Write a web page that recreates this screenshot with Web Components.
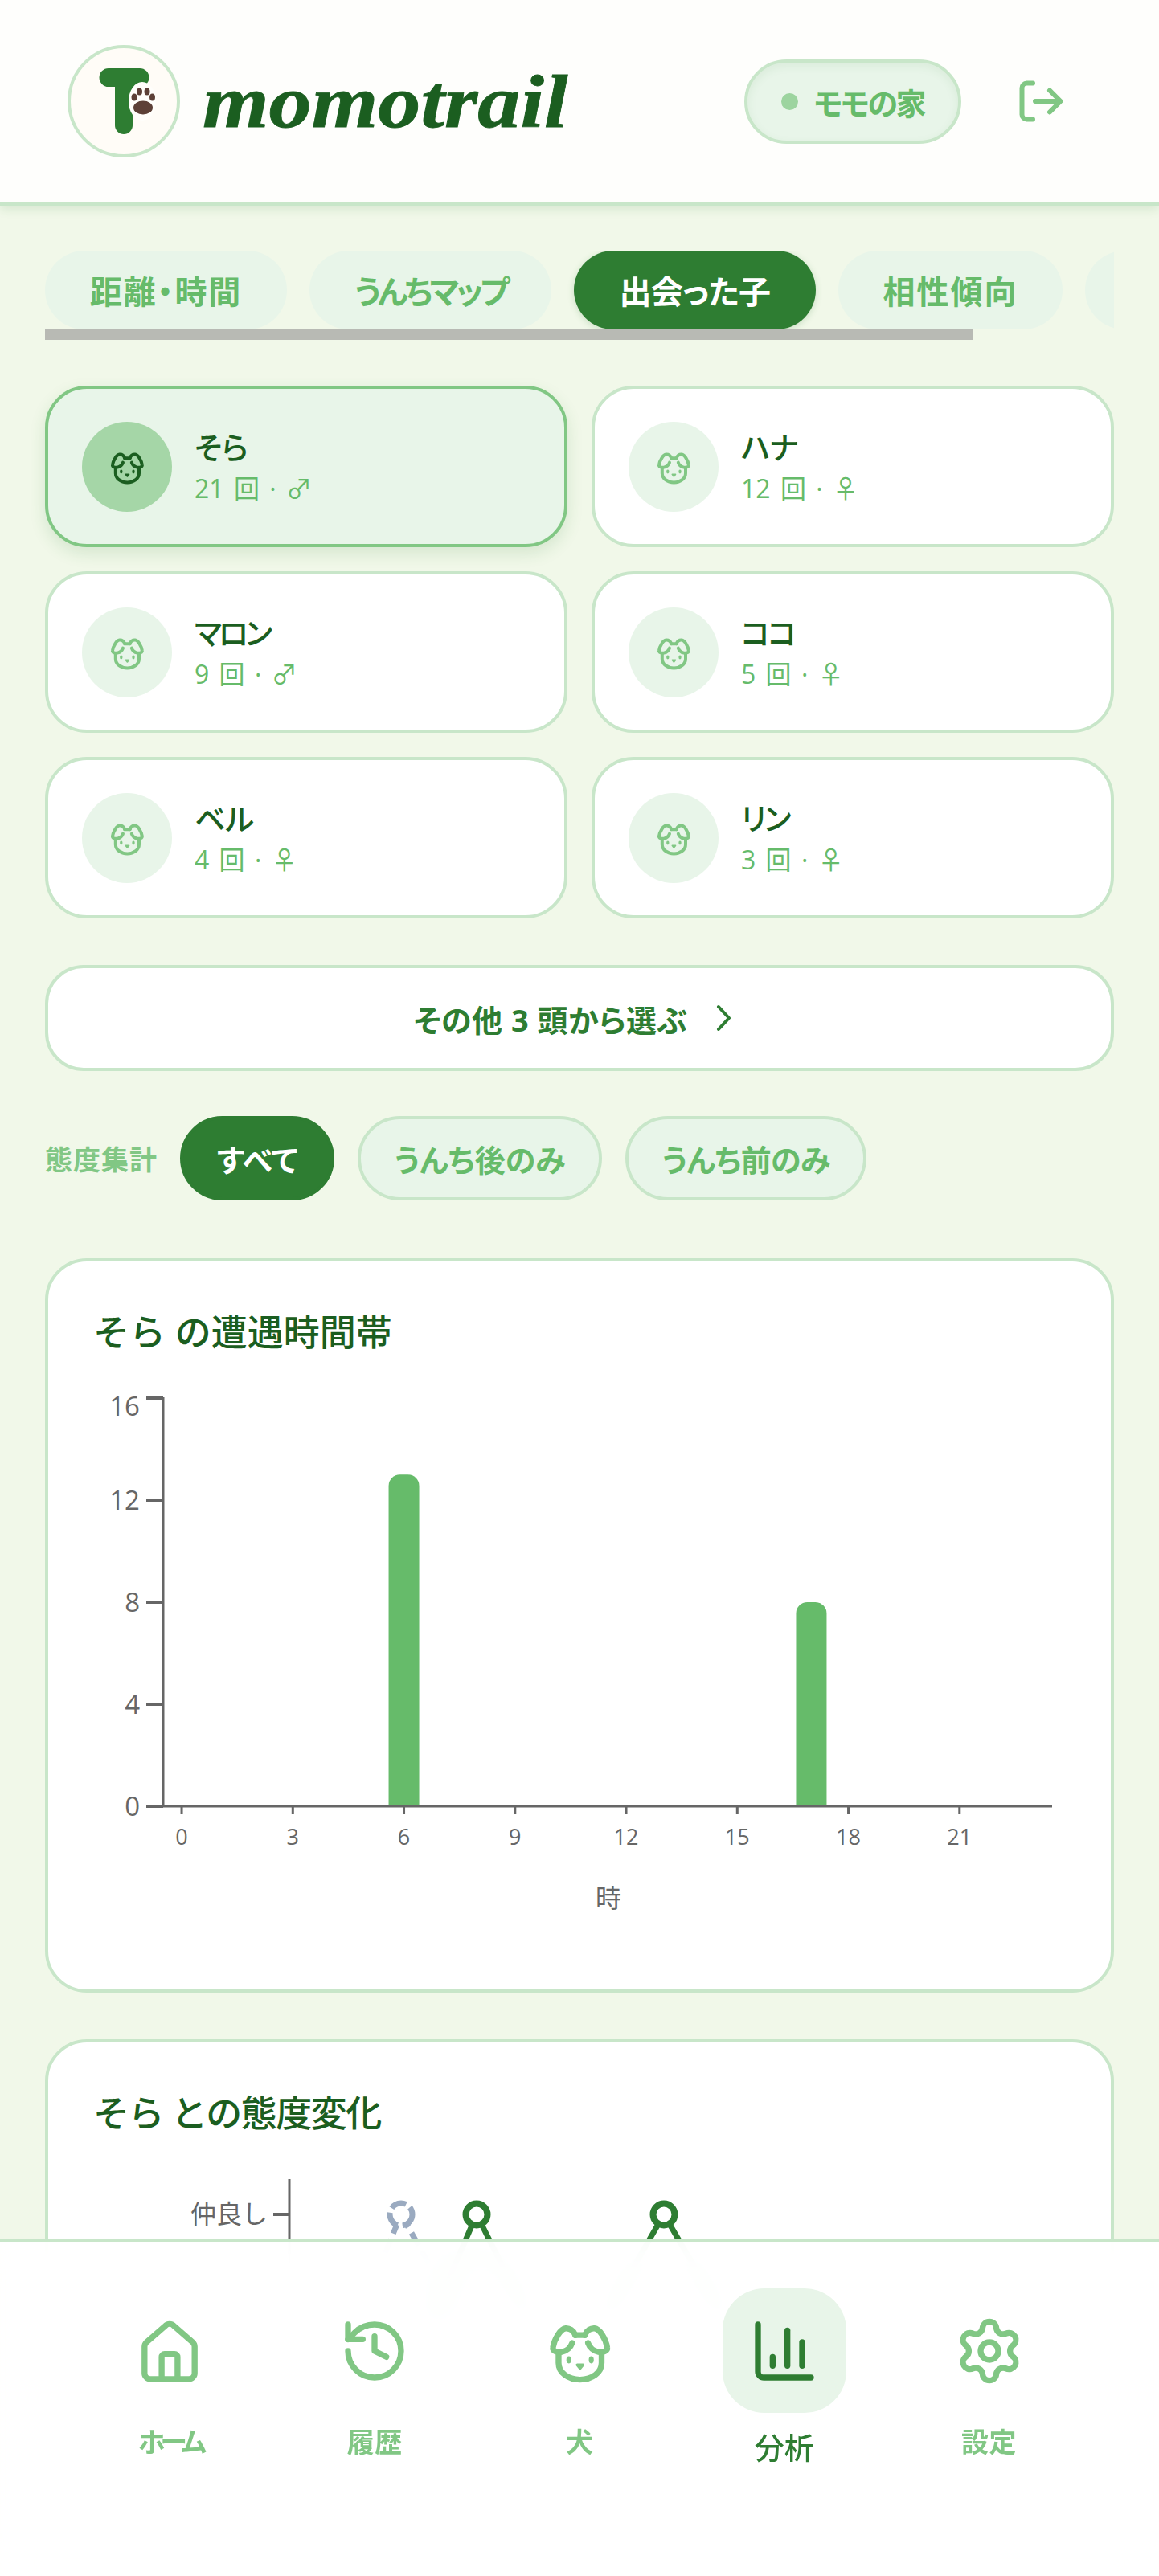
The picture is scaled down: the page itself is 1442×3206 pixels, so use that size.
<!doctype html>
<html lang="ja"><head><meta charset="utf-8"><title>momotrail</title>
<style>
html,body{margin:0;height:100%;overflow:hidden;background:#f1f8e9}
body{font-family:"Open Sans","Noto Sans CJK JP","DejaVu Sans",sans-serif;display:flex;flex-direction:column;color:#1b5e20}
main{flex:1;min-height:0;overflow:hidden;padding:56px 56px 0;display:flex;flex-direction:column}
</style></head><body>
<app-header></app-header>
<main>
<tab-strip>
 <tab-pill style="width:301px;letter-spacing:1.8px">距離・時間</tab-pill><tab-pill style="width:301px;letter-spacing:-4px">うんちマップ</tab-pill><tab-pill active style="width:301px;letter-spacing:-.6px">出会った子</tab-pill><tab-pill style="width:279px;letter-spacing:2px">相性傾向</tab-pill><tab-pill style="width:236px"></tab-pill>
</tab-strip>
<dog-grid>
 <dog-card selected name="そら" meta="21 回 · ♂" style="--ls:-.5px"></dog-card>
 <dog-card name="ハナ" meta="12 回 · ♀" style="--ls:-1px"></dog-card>
 <dog-card name="マロン" meta="9 回 · ♂" style="--ls:-4px"></dog-card>
 <dog-card name="ココ" meta="5 回 · ♀" style="--ls:-3px"></dog-card>
 <dog-card name="ベル" meta="4 回 · ♀"></dog-card>
 <dog-card name="リン" meta="3 回 · ♀" style="--ls:-2.500px"></dog-card>
</dog-grid>
<more-button>その他 3 頭から選ぶ</more-button>
<filter-row label="態度集計"><filter-chip active style="width:192px">すべて</filter-chip><filter-chip style="width:304px">うんち後のみ</filter-chip><filter-chip style="width:300px;letter-spacing:-.7px">うんち前のみ</filter-chip></filter-row>
<chart-card heading="そら の遭遇時間帯"><encounter-chart></encounter-chart></chart-card>
<chart-card second heading="そら との態度変化" style="--ls:-1.500px"><attitude-chart></attitude-chart></chart-card>
</main>
<nav-bar>
 <nav-item icon="home" label="ホーム" style="--ls:-6px"></nav-item>
 <nav-item icon="history" label="履歴" style="--ls:.5px"></nav-item>
 <nav-item icon="dog" label="犬"></nav-item>
 <nav-item icon="chart" label="分析" active></nav-item>
 <nav-item icon="gear" label="設定" style="--ls:.5px"></nav-item>
</nav-bar>
<script>
const DOG=`<path d="M10.6 6.600C10 5 8.600 4.200 7.300 4.300 5.600 4.400 3.400 8 3 10.800 2.800 12 4.400 12.600 6 12.300 7.600 12 9 10.800 9.500 9.300"/><path d="M13.800 6.600C14.400 5 15.800 4.200 17.100 4.300 18.800 4.400 21 8 21.400 10.800 21.600 12 20 12.600 18.400 12.300 16.800 12 15.400 10.800 14.900 9.300"/><path d="M10.600 6.600h3.200"/><path d="M4.900 12.800V16c0 3.300 3.200 5.700 7.300 5.700s7.300-2.400 7.300-5.700v-3.200"/><ellipse cx="8.400" cy="15" rx=".85" ry="1.200" fill="currentColor" stroke="none"/><ellipse cx="16" cy="15" rx=".85" ry="1.200" fill="currentColor" stroke="none"/><path d="M11.200 16.700h2l-1 1.200z" fill="currentColor" stroke-width=".9"/>`;
const ICONS={
home:`<path d="M14.700 21.500V14a1 1 0 0 0-1-1h-3.400a1 1 0 0 0-1 1v7.500"/><path d="M3.500 10.500a2 2 0 0 1 .6-1.400l6.500-5.700a2 2 0 0 1 2.800 0l6.500 5.700a2 2 0 0 1 .6 1.400v9a2 2 0 0 1-2 2H5.500a2 2 0 0 1-2-2z"/>`,
history:`<path d="M3 12a9 9 0 1 0 9-9 9.750 9.750 0 0 0-6.740 2.740L3 8"/><path d="M3 3v5h5"/><path d="M12 7v5l4 2"/>`,
dog:DOG,
chart:`<path d="M3 3v16a2 2 0 0 0 2 2h16"/><path d="M18 17V9"/><path d="M13 17V5"/><path d="M8 17v-3"/>`,
gear:`<path d="M9.671 4.136a2.340 2.340 0 0 1 4.659 0 2.340 2.340 0 0 0 3.319 1.915 2.340 2.340 0 0 1 2.330 4.033 2.340 2.340 0 0 0 0 3.831 2.340 2.340 0 0 1-2.330 4.033 2.340 2.340 0 0 0-3.319 1.915 2.340 2.340 0 0 1-4.659 0 2.340 2.340 0 0 0-3.320-1.915 2.340 2.340 0 0 1-2.330-4.033 2.340 2.340 0 0 0 0-3.831A2.340 2.340 0 0 1 6.350 6.051a2.340 2.340 0 0 0 3.319-1.915"/><circle cx="12" cy="12" r="3"/>`
};
const svgIcon=(inner,size)=>`<svg width="${size}" height="${size}" viewBox="0 0 24 24" fill="none" stroke="currentColor" stroke-width="2" stroke-linecap="round" stroke-linejoin="round">${inner}</svg>`;
function def(name,css,html){
  customElements.define(name,class extends HTMLElement{
    constructor(){super();this.attachShadow({mode:"open"})}
    connectedCallback(){this.shadowRoot.innerHTML=`<style>${css}</style>`+(typeof html==="function"?html(this):html);}
  });
}
def("app-header",`
:host{display:flex;flex:none;align-items:center;height:252px;box-sizing:content-box;background:#fefefc;border-bottom:4px solid #c8e6c9;box-shadow:0 4px 12px rgba(46,125,50,.14);padding:0 112px 0 84px;position:relative;z-index:2}
.logo{display:block;flex:none}
.word{font:italic 700 94px/1 "Liberation Serif",serif;color:#1b5e20;-webkit-text-stroke:.8px #1b5e20;margin-left:28px;transform:scaleX(1.13);transform-origin:left center;flex:none}
.sp{flex:1}
.pill{display:flex;align-items:center;gap:19px;height:105px;box-sizing:border-box;padding:0 42px;border-radius:53px;border:4px solid #c8e6c9;background:#e8f5e9;box-shadow:inset 0 4px 12px rgba(46,125,50,.08);color:#66bb6a;font-weight:700;font-size:38px;font-feature-settings:"palt";letter-spacing:-2.500px}
.dot{width:21px;height:21px;border-radius:50%;background:#9cd49f}
.out{display:block;margin-left:62px;color:#81c784}
`,`<svg class="logo" width="140" height="140" viewBox="0 0 140 140"><circle cx="70" cy="70" r="68" fill="#fffcf7" stroke="#c8e6c9" stroke-width="4"/><path d="M51 29h39a11 11 0 0 1 0 23h-9v48a11 11 0 0 1-22 0V52h-8a11 11 0 0 1 0-23z" fill="#2e7d32"/><ellipse cx="93" cy="70" rx="17" ry="24" fill="#fffefb"/><ellipse cx="94" cy="78" rx="12" ry="8.500" fill="#5d4037"/><ellipse cx="83" cy="65" rx="3.500" ry="4.500" fill="#5d4037"/><ellipse cx="89.500" cy="58" rx="3.500" ry="4.500" fill="#5d4037"/><ellipse cx="99" cy="58" rx="3.500" ry="4.500" fill="#5d4037"/><ellipse cx="105.500" cy="65" rx="3.500" ry="4.500" fill="#5d4037"/></svg>
<span class="word">momotrail</span><span class="sp"></span>
<div class="pill"><span class="dot"></span><span>モモの家</span></div>
<svg class="out" width="72" height="72" viewBox="0 0 24 24" fill="none" stroke="currentColor" stroke-width="2" stroke-linecap="round" stroke-linejoin="round"><path d="M9 4.500H6.500a2 2 0 0 0-2 2v11a2 2 0 0 0 2 2H9"/><path d="M10 12h10M16 7.500l4.500 4.500-4.500 4.500"/></svg>`);
def("tab-strip",`
:host{display:block;flex:none;height:112px}
.s{display:flex;gap:28px;overflow:hidden;height:98px;position:relative;z-index:1}
.bar{width:1155px;height:14px;background:#b8bab4;margin-top:-1px}
`,`<div class="s"><slot></slot></div><div class="bar"></div>`);
def("tab-pill",`
:host{display:flex;flex:none;align-items:center;justify-content:center;height:98px;box-sizing:border-box;border-radius:49px;background:#e8f5e9;color:#66bb6a;font-size:40px;font-weight:700;font-feature-settings:"palt";white-space:nowrap}
:host([active]){background:#2e7d32;color:#fff;box-shadow:0 2px 8px rgba(46,125,50,.2)}
`,`<slot></slot>`);
def("dog-grid",`
:host{display:grid;grid-template-columns:1fr 1fr;gap:30px;margin-top:56px;flex:none}
`,`<slot></slot>`);
def("dog-card",`
:host{display:flex;align-items:center;gap:28px;height:201px;box-sizing:border-box;padding:0 42px;background:#fff;border:4px solid #c8e6c9;border-radius:52px}
:host([selected]){background:#e8f5e9;border-color:#81c784;box-shadow:0 8px 20px rgba(46,125,50,.14)}
.av{width:112px;height:112px;border-radius:50%;background:#e8f5e9;color:#81c784;display:flex;align-items:center;justify-content:center;flex:none}
:host([selected]) .av{background:#a5d6a7;color:#1b5e20}
.t{padding-bottom:4px}
.n{font-size:38px;line-height:52px;font-weight:500;color:#1b5e20;font-feature-settings:"palt";letter-spacing:var(--ls,0)}
.m{font-size:32px;line-height:40px;color:#66bb6a;margin-top:6px;word-spacing:4px}
`,el=>`<div class="av">${svgIcon(DOG,48)}</div><div class="t"><div class="n">${el.getAttribute("name")}</div><div class="m">${el.getAttribute("meta")}</div></div>`);
def("more-button",`
:host{display:flex;align-items:center;justify-content:center;gap:34px;height:132px;box-sizing:border-box;padding-right:14px;margin-top:58px;background:#fff;border:4px solid #c8e6c9;border-radius:48px;color:#2e7d32;font-size:38px;font-weight:700;font-feature-settings:"palt";letter-spacing:.5px;flex:none}
svg{display:block}
`,`<slot></slot><svg width="24" height="36" viewBox="0 0 24 36" fill="none" stroke="currentColor" stroke-width="4" stroke-linecap="round" stroke-linejoin="round"><path d="M5 4l13 14L5 32"/></svg>`);
def("filter-row",`
:host{display:flex;align-items:center;gap:29px;margin-top:56px;flex:none}
.l{width:139px;white-space:nowrap;font-size:34px;font-weight:700;color:#81c784;font-feature-settings:"palt";letter-spacing:1px}
`,el=>`<span class="l">${el.getAttribute("label")}</span><slot></slot>`);
def("filter-chip",`
:host{display:flex;align-items:center;justify-content:center;height:105px;box-sizing:border-box;border-radius:53px;background:#e8f5e9;border:4px solid #c8e6c9;color:#66bb6a;font-size:38px;font-weight:700;font-feature-settings:"palt";white-space:nowrap}
:host([active]){background:#2e7d32;border-color:#2e7d32;color:#fff}
`,`<slot></slot>`);
def("chart-card",`
:host{display:block;flex:none;margin-top:72px;background:#fff;border:4px solid #c8e6c9;border-radius:52px;padding:56px 56px 56px}
:host([second]){margin-top:58px}
h2{margin:0 0 16px;font-size:45px;line-height:64px;font-weight:500;color:#1b5e20;letter-spacing:var(--ls,0)}
`,el=>`<h2>${el.getAttribute("heading")}</h2><slot></slot>`);
def("encounter-chart",`
:host{display:block}svg{display:block}
text{font-family:"Open Sans","Noto Sans CJK JP",sans-serif;fill:#666}
`,()=>{
  const X0=203,Y0=2248,W=1106,st=W/24,u=127/4;let s="";
  for(const v of [0,4,8,12,16]){const y=Y0-v*u;s+=`<path d="M182 ${y}H${X0}" stroke="#666" stroke-width="4"/><text x="174" y="${v===16?y+22:y+12}" text-anchor="end" font-size="33">${v}</text>`}
  for(const h of [0,3,6,9,12,15,18,21]){const x=X0+(h+.5)*st;s+=`<path d="M${x} ${Y0}v10" stroke="#666" stroke-width="3"/><text x="${x}" y="${Y0+48}" text-anchor="middle" font-size="27">${h}</text>`}
  const bar=(h,v)=>{const c=X0+(h+.5)*st,x=c-19,t=Y0-v*u;return `<path d="M${x} ${Y0}V${t+14}a14 14 0 0 1 14-14h10a14 14 0 0 1 14 14V${Y0}z" fill="#66bb6a"/>`};
  return `<svg width="1210" height="714" viewBox="116 1706 1210 714">${bar(6,13)}${bar(17,8)}<path d="M${X0} 1739V${Y0}H${X0+W}" fill="none" stroke="#666" stroke-width="3"/>${s}<text x="757" y="2374" text-anchor="middle" font-size="32">時</text></svg>`;
});
def("attitude-chart",`
:host{display:block}svg{display:block}
text{font-family:"Open Sans","Noto Sans CJK JP",sans-serif;fill:#666}
`,()=>`<svg width="1210" height="400" viewBox="116 2678 1210 400">
<path d="M360 2712V3078" stroke="#666" stroke-width="3"/><path d="M340 2756H360" stroke="#666" stroke-width="4"/>
<text x="333" y="2767" text-anchor="end" font-size="32">仲良し</text>
<path d="M440 2900L499 2756 L580 2900" fill="none" stroke="#9aaac0" stroke-width="7" stroke-dasharray="18 8"/>
<circle cx="499" cy="2756" r="14" fill="#fff" stroke="#9aaac0" stroke-width="7" stroke-dasharray="20 6"/>
<path d="M531 2900L593 2756 L665 2900M743 2900L826 2756 L910 2900" fill="none" stroke="#2e7d32" stroke-width="7"/>
<circle cx="593" cy="2756" r="13.500" fill="#fff" stroke="#2e7d32" stroke-width="8"/>
<circle cx="826" cy="2756" r="13.500" fill="#fff" stroke="#2e7d32" stroke-width="8"/>
</svg>`);
def("nav-bar",`
:host{position:fixed;left:0;right:0;bottom:0;height:420px;box-sizing:border-box;border-top:4px solid #c8e6c9;background:rgba(255,255,255,.96);backdrop-filter:blur(24px);display:grid;grid-template-columns:repeat(5,1fr);padding:58px 84px 0;align-items:start;justify-items:center}
`,`<slot></slot>`);
def("nav-item",`
:host{display:flex;flex-direction:column;align-items:center;color:#81c784}
.i{width:154px;height:155px;display:flex;align-items:center;justify-content:center;border-radius:52px}
.l{font-size:34px;line-height:44px;font-weight:700;margin-top:14px;font-feature-settings:"palt";letter-spacing:var(--ls,0)}
:host([active]){color:#2e7d32}
:host([active]) .i{background:#e8f5e9}
:host([active]) .l{font-size:37px;line-height:52px;font-weight:500;margin-top:18px}
`,el=>`<div class="i">${svgIcon(ICONS[el.getAttribute("icon")],88)}</div><div class="l">${el.getAttribute("label")}</div>`);
</script>
</body></html>
